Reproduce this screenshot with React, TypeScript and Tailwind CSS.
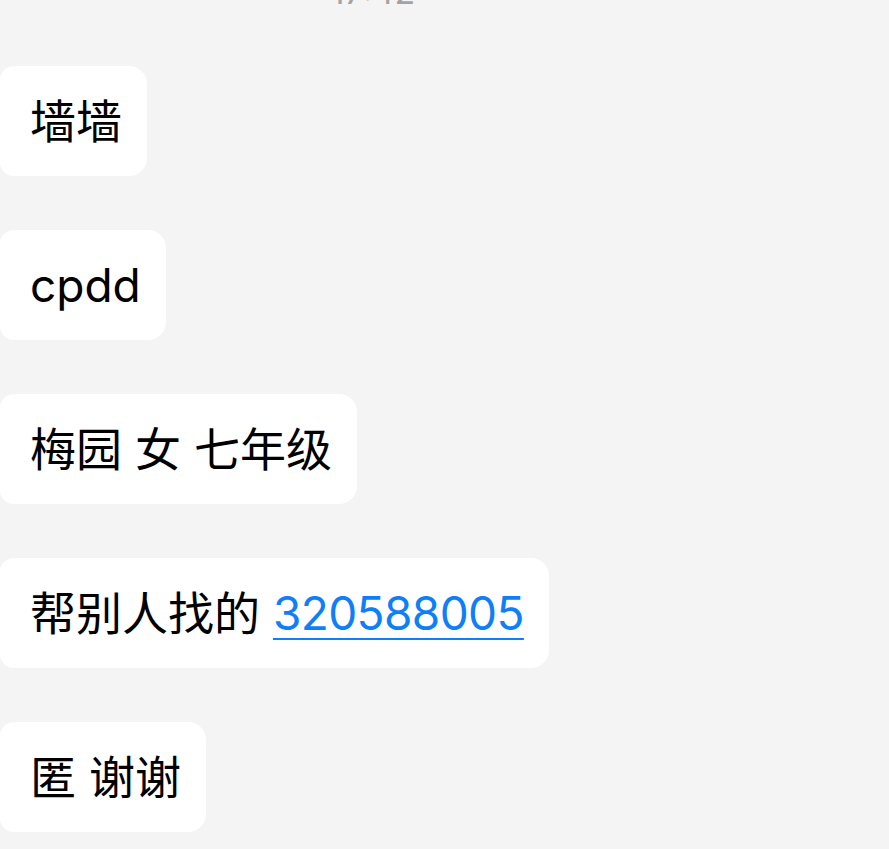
import React from 'react';

const messages: React.ReactNode[] = [
  '墙墙',
  'cpdd',
  '梅园 女 七年级',
  <>
    帮别人找的{' '}
    <span className="tracking-[-0.6px] text-[#0f7ff7] underline decoration-[2px] underline-offset-[8px]">320588005</span>
  </>,
  '匿 谢谢',
];

const App: React.FC = () => {
  return (
    <div
      className="min-h-screen w-full overflow-hidden bg-[#f4f4f4] text-black"
      style={{ fontFamily: 'Inter, "Noto Sans CJK SC", sans-serif' }}
    >
      {/* timestamp, cut off at the top */}
      <div className="-mt-[25px] h-[25px] w-[746px] text-center text-[34px] leading-[34px] text-[#a3a3a3]">17:42</div>

      <div className="mt-[66px] flex flex-col items-start gap-[54px]">
        {messages.map((m, i) => (
          <div
            key={i}
            className="flex h-[110px] items-center rounded-r-[18px] rounded-l-[14px] bg-white pl-[30px] pr-[25px] text-[46px] leading-none"
          >
            <span className="whitespace-pre">{m}</span>
          </div>
        ))}
      </div>
    </div>
  );
};

export default App;
